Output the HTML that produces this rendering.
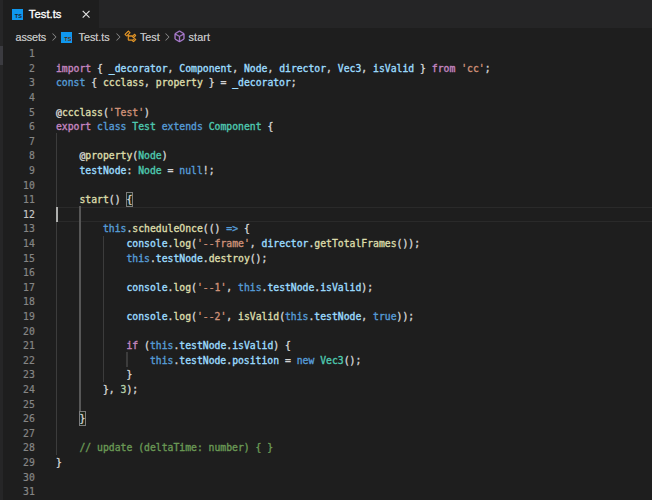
<!DOCTYPE html>
<html><head><meta charset="utf-8"><title>Test.ts</title>
<style>
html,body{margin:0;padding:0;}
body{width:652px;height:500px;background:#1e1e1e;overflow:hidden;position:relative;font-family:"Liberation Sans",sans-serif;}
#tabs{position:absolute;left:0;top:0;width:652px;height:28px;background:#252526;}
#tab{position:absolute;left:0;top:0;width:99px;height:28px;background:#1e1e1e;}
.tsi{position:absolute;width:11px;height:11.2px;background:#0f97ee;}
.tsi span{position:absolute;right:0.8px;bottom:0.8px;font:bold 5.5px/5px "Liberation Sans",sans-serif;color:#1e1e1e;letter-spacing:0;}
#tabname{position:absolute;left:28.8px;top:7.3px;font-size:11.3px;-webkit-text-stroke:0.3px #fff;color:#fff;line-height:14px;}
#close{position:absolute;left:81.1px;top:9.4px;width:10px;height:10px;}
#bc{position:absolute;left:0;top:28.6px;width:652px;height:17px;font-size:10.8px;color:#bcbcbc;line-height:17px;text-shadow:0 0 0.3px #bcbcbc;}
.chev{position:absolute;top:2.7px;width:12px;height:12px;fill:#9a9a9a;}
.sym{position:absolute;width:13px;height:13px;}
.sym path{stroke-width:0.5px;stroke-linejoin:round;}
#bc>span{position:absolute;top:0;white-space:pre;}
#leftstrip{position:absolute;left:0;top:0;width:2.5px;height:500px;background:#262627;}
#leftbar{position:absolute;left:0;top:45.6px;width:2.5px;height:19.4px;background:#3b3b40;}
.ln{position:absolute;left:0;width:34.8px;-webkit-text-stroke:0.2px;text-align:right;color:#858585;font-family:"DejaVu Sans Mono","Liberation Mono",monospace;font-size:9.750px;line-height:14.605px;height:14.605px;}
.ln.act{color:#c6c6c6;}
.cl{position:absolute;left:56.0px;white-space:pre;font-family:"DejaVu Sans Mono","Liberation Mono",monospace;font-size:9.750px;line-height:14.605px;height:14.605px;color:#d4d4d4;-webkit-text-stroke:0.35px;}
.k{color:#c586c0}.b{color:#569cd6}.v{color:#9cdcfe}.c{color:#4fc1ff}.t{color:#4ec9b0}.f{color:#dcdcaa}.s{color:#ce9178}.n{color:#b5cea8}.m{color:#6a9955}.d{color:#d4d4d4}
.bb{position:absolute;box-sizing:border-box;border:1px solid #7c7c7c;background:rgba(0,100,0,0.1);}
.ig{position:absolute;width:1.2px;background:#3c3c3c;}
.iga{background:#575757;width:1.8px;margin-left:-0.4px}
#curline{position:absolute;left:56px;top:206.96px;width:596px;height:14.6px;box-sizing:border-box;border-top:1.5px solid #2a2a2a;border-bottom:1.5px solid #2a2a2a;}
#cursor{position:absolute;left:56px;top:206.96px;width:1.8px;height:15.2px;background:#aeafad;}
</style></head><body>
<div id="tabs"><div id="tab">
<div class="tsi" style="left:11.7px;top:8.9px"><span>TS</span></div>
<div id="tabname">Test.ts</div>
<svg id="close" viewBox="0 0 10 10"><path d="M1.7 1.9 L8.5 8.7 M8.5 1.9 L1.7 8.7" stroke="#e4e4e4" stroke-width="1.15" fill="none"/></svg>
</div></div>
<div id="bc">
<span style="left:15.6px;letter-spacing:-0.12px">assets</span>
<svg class="chev" style="left:48px" viewBox="0 0 16 16"><path d="M10.072 8.024L5.715 3.667l.618-.62L11 7.716v.618L6.333 13l-.618-.619 4.357-4.357z"/></svg>
<div class="tsi" style="left:61.2px;top:3px"><span>TS</span></div>
<span style="left:78.5px">Test.ts</span>
<svg class="chev" style="left:111.8px" viewBox="0 0 16 16"><path d="M10.072 8.024L5.715 3.667l.618-.62L11 7.716v.618L6.333 13l-.618-.619 4.357-4.357z"/></svg>
<svg class="sym" style="left:123.8px;top:1.5px" viewBox="0 0 16 16"><path fill="#ee9d28" stroke="#ee9d28" d="M11.34 9.71h.71l2.67-2.67v-.71L13.38 5h-.7l-1.82 1.81h-5V5.56l1.86-1.85V3l-2-2H5L1 5v.71l2 2h.71l1.14-1.15v5.79l.5.5H10v.52l1.33 1.34h.71l2.67-2.67v-.71L13.37 10h-.7l-1.86 1.85h-5v-4H10v.48l1.34 1.38zm1.69-3.65l.63.63-2 2-.63-.63 2-2zm0 5l.63.63-2 2-.63-.63 2-2zM3.35 6.650l-1.29-1.3 3.29-3.29 1.3 1.29-3.3 3.3z"/></svg>
<span style="left:139.9px">Test</span>
<svg class="chev" style="left:161px" viewBox="0 0 16 16"><path d="M10.072 8.024L5.715 3.667l.618-.62L11 7.716v.618L6.333 13l-.618-.619 4.357-4.357z"/></svg>
<svg class="sym" style="left:173.2px;top:1.3px" viewBox="0 0 16 16"><path fill="#b180d7" stroke="#b180d7" d="M13.51 4l-5-3h-1l-5 3-.49.86v6l.49.85 5 3h1l5-3 .49-.85v-6L13.51 4zm-6 9.560l-4.500-2.700V5.700l4.500 2.450v5.410zM3.270 4.700l4.740-2.840 4.740 2.840-4.740 2.590L3.270 4.700zm9.740 6.160l-4.500 2.700V8.150l4.500-2.450v5.160z"/></svg>
<span style="left:188.6px;letter-spacing:0.12px">start</span>
</div>
<div id="leftstrip"></div><div id="leftbar"></div>
<div id="curline"></div>
<div class="ig" style="left:55.90px;top:133.33px;height:321.31px"></div>
<div class="ig iga" style="left:79.38px;top:206.36px;height:204.47px"></div>
<div class="ig" style="left:102.86px;top:235.56px;height:146.05px"></div>
<div class="ig" style="left:126.34px;top:352.40px;height:14.61px"></div>
<div class="bb" style="left:126.14px;top:191.55px;width:6.77px;height:15.21px"></div>
<div class="bb" style="left:79.18px;top:410.62px;width:6.77px;height:15.21px"></div>
<div class="ln" style="top:47.10px">1</div>
<div class="ln" style="top:61.71px">2</div>
<div class="cl" style="top:61.71px"><span class="k">import</span><span class="d"> { </span><span class="v">_decorator</span><span class="d">, </span><span class="v">Component</span><span class="d">, </span><span class="v">Node</span><span class="d">, </span><span class="v">director</span><span class="d">, </span><span class="v">Vec3</span><span class="d">, </span><span class="v">isValid</span><span class="d"> } </span><span class="k">from</span><span class="d"> </span><span class="s">&#x27;cc&#x27;</span><span class="d">;</span></div>
<div class="ln" style="top:76.31px">3</div>
<div class="cl" style="top:76.31px"><span class="b">const</span><span class="d"> { </span><span class="f">ccclass</span><span class="d">, </span><span class="f">property</span><span class="d"> } = </span><span class="v">_decorator</span><span class="d">;</span></div>
<div class="ln" style="top:90.92px">4</div>
<div class="ln" style="top:105.52px">5</div>
<div class="cl" style="top:105.52px"><span class="d">@</span><span class="f">ccclass</span><span class="d">(</span><span class="s">&#x27;Test&#x27;</span><span class="d">)</span></div>
<div class="ln" style="top:120.13px">6</div>
<div class="cl" style="top:120.13px"><span class="k">export</span><span class="d"> </span><span class="b">class</span><span class="d"> </span><span class="t">Test</span><span class="d"> </span><span class="b">extends</span><span class="d"> </span><span class="t">Component</span><span class="d"> {</span></div>
<div class="ln" style="top:134.73px">7</div>
<div class="ln" style="top:149.34px">8</div>
<div class="cl" style="top:149.34px"><span class="d">    @</span><span class="f">property</span><span class="d">(</span><span class="t">Node</span><span class="d">)</span></div>
<div class="ln" style="top:163.94px">9</div>
<div class="cl" style="top:163.94px"><span class="d">    </span><span class="v">testNode</span><span class="d">: </span><span class="t">Node</span><span class="d"> = </span><span class="b">null</span><span class="d">!;</span></div>
<div class="ln" style="top:178.54px">10</div>
<div class="ln" style="top:193.15px">11</div>
<div class="cl" style="top:193.15px"><span class="d">    </span><span class="f">start</span><span class="d">() </span><span class="d">{</span></div>
<div class="ln act" style="top:207.76px">12</div>
<div class="ln" style="top:222.36px">13</div>
<div class="cl" style="top:222.36px"><span class="d">        </span><span class="b">this</span><span class="d">.</span><span class="f">scheduleOnce</span><span class="d">(() </span><span class="b">=&gt;</span><span class="d"> {</span></div>
<div class="ln" style="top:236.97px">14</div>
<div class="cl" style="top:236.97px"><span class="d">            </span><span class="v">console</span><span class="d">.</span><span class="f">log</span><span class="d">(</span><span class="s">&#x27;--frame&#x27;</span><span class="d">, </span><span class="v">director</span><span class="d">.</span><span class="f">getTotalFrames</span><span class="d">());</span></div>
<div class="ln" style="top:251.57px">15</div>
<div class="cl" style="top:251.57px"><span class="d">            </span><span class="b">this</span><span class="d">.</span><span class="v">testNode</span><span class="d">.</span><span class="f">destroy</span><span class="d">();</span></div>
<div class="ln" style="top:266.18px">16</div>
<div class="ln" style="top:280.78px">17</div>
<div class="cl" style="top:280.78px"><span class="d">            </span><span class="v">console</span><span class="d">.</span><span class="f">log</span><span class="d">(</span><span class="s">&#x27;--1&#x27;</span><span class="d">, </span><span class="b">this</span><span class="d">.</span><span class="v">testNode</span><span class="d">.</span><span class="v">isValid</span><span class="d">);</span></div>
<div class="ln" style="top:295.38px">18</div>
<div class="ln" style="top:309.99px">19</div>
<div class="cl" style="top:309.99px"><span class="d">            </span><span class="v">console</span><span class="d">.</span><span class="f">log</span><span class="d">(</span><span class="s">&#x27;--2&#x27;</span><span class="d">, </span><span class="f">isValid</span><span class="d">(</span><span class="b">this</span><span class="d">.</span><span class="v">testNode</span><span class="d">, </span><span class="b">true</span><span class="d">));</span></div>
<div class="ln" style="top:324.59px">20</div>
<div class="ln" style="top:339.20px">21</div>
<div class="cl" style="top:339.20px"><span class="d">            </span><span class="k">if</span><span class="d"> (</span><span class="b">this</span><span class="d">.</span><span class="v">testNode</span><span class="d">.</span><span class="v">isValid</span><span class="d">) {</span></div>
<div class="ln" style="top:353.80px">22</div>
<div class="cl" style="top:353.80px"><span class="d">                </span><span class="b">this</span><span class="d">.</span><span class="v">testNode</span><span class="d">.</span><span class="v">position</span><span class="d"> = </span><span class="b">new</span><span class="d"> </span><span class="t">Vec3</span><span class="d">();</span></div>
<div class="ln" style="top:368.41px">23</div>
<div class="cl" style="top:368.41px"><span class="d">            }</span></div>
<div class="ln" style="top:383.01px">24</div>
<div class="cl" style="top:383.01px"><span class="d">        }, </span><span class="n">3</span><span class="d">);</span></div>
<div class="ln" style="top:397.62px">25</div>
<div class="ln" style="top:412.22px">26</div>
<div class="cl" style="top:412.22px"><span class="d">    </span><span class="d">}</span></div>
<div class="ln" style="top:426.83px">27</div>
<div class="ln" style="top:441.44px">28</div>
<div class="cl" style="top:441.44px"><span class="d">    </span><span class="m">// update (deltaTime: number) { }</span></div>
<div class="ln" style="top:456.04px">29</div>
<div class="cl" style="top:456.04px"><span class="d">}</span></div>
<div class="ln" style="top:470.64px">30</div>
<div class="ln" style="top:485.25px">31</div>
<div id="cursor"></div>
</body></html>
